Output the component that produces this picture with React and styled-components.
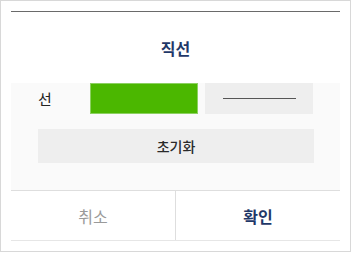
import styled, { createGlobalStyle } from "styled-components";

const GlobalStyle = createGlobalStyle`
  html, body {
    margin: 0;
    padding: 0;
    background: #ffffff;
  }
  body {
    font-family: "Noto Sans CJK KR", "Noto Sans", sans-serif;
  }
`

export default function App() {
  return (
    <Frame>
      <GlobalStyle />
      <Dialog>
        <Title>직선</Title>
        <Body>
          <Row>
            <Label>선</Label>
            <Swatch color="#4bb700" />
            <StyleBox>
              <LineSample />
            </StyleBox>
          </Row>
          <ResetButton>초기화</ResetButton>
        </Body>
        <Footer>
          <FooterButton>취소</FooterButton>
          <FooterButton primary>확인</FooterButton>
        </Footer>
      </Dialog>
    </Frame>
  )
}

const Frame = styled.div`
  box-sizing: border-box;
  width: 351px;
  height: 252px;
  border: 1px solid #d8d8d8;
  padding: 10px 0 0 10px;
  background: #fff;
`
const Dialog = styled.div`
  width: 329px;
  border-top: 1px solid #6a6a6a;
  display: flex;
  flex-direction: column;
`
const Title = styled.div`
  height: 71px;
  display: flex;
  align-items: center;
  justify-content: center;
  font-size: 16px;
  font-weight: 700;
  color: #1f3868;
`
const Body = styled.div`
  background: #fafafa;
  padding: 0 26px 27px 27px;
  display: flex;
  flex-direction: column;
  gap: 15px;
`
const Row = styled.div`
  display: flex;
  align-items: center;
  gap: 7px;
`
const Label = styled.span`
  width: 45px;
  padding-left: 0;
  font-size: 15px;
  color: #222;
`
const Swatch = styled.div`
  box-sizing: border-box;
  width: 108px;
  height: 31px;
  background: ${p => p.color};
  border: 1px solid #8cd061;
`
const StyleBox = styled.div`
  width: 108px;
  height: 31px;
  background: #eeeeee;
  display: flex;
  align-items: center;
  justify-content: center;
`
const LineSample = styled.div`
  width: 73px;
  height: 1px;
  background: #555;
`
const ResetButton = styled.div`
  height: 34px;
  background: #eeeeee;
  display: flex;
  align-items: center;
  justify-content: center;
  font-size: 14px;
  font-weight: 500;
  color: #2a2a2a;
`
const Footer = styled.div`
  display: flex;
  height: 49px;
  border-top: 1px solid #dedede;
  border-bottom: 1px solid #e6e6e6;
`
const FooterButton = styled.div`
  flex: 1;
  display: flex;
  align-items: center;
  justify-content: center;
  font-size: 16px;
  font-weight: ${p => (p.primary ? 700 : 400)};
  color: ${p => (p.primary ? "#1f3868" : "#9a9a9a")};
  & + & {
    border-left: 1px solid #dedede;
  }
`
